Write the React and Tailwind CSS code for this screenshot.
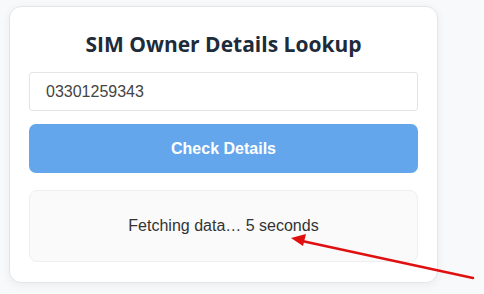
export default function App() {
  return (
    <div className="relative min-h-[294px] w-[484px] bg-[#f8f9fb] pl-[9px] pt-[6px] font-['Liberation_Sans',Arial,sans-serif]">
      <div className="w-[429px] rounded-[12px] border border-[#e3e5e8] bg-white px-[19px] pt-[23px] pb-[20px] shadow-[0_2px_10px_rgba(0,0,0,0.06)]">
        <h1 className="mb-[14px] text-center font-['Open_Sans',sans-serif] text-[21px] leading-[28px] font-bold text-[#1d2b3a]">
          SIM Owner Details Lookup
        </h1>
        <input
          readOnly
          value="03301259343"
          className="block h-[39px] w-full rounded-[3px] border border-[#e2e4e7] bg-white px-[16px] text-[16px] text-[#444] outline-none"
        />
        <button className="mt-[13px] block h-[49px] w-full rounded-[7px] bg-[#64a6ec] text-[16px] font-bold text-white">
          Check Details
        </button>
        <div className="mt-[17px] flex h-[72px] items-center justify-center rounded-[8px] border border-[#efefef] bg-[#fafafa] text-[16px] text-[#333]">
          Fetching data… 5 seconds
        </div>
      </div>
      <svg className="absolute left-0 top-0" width="484" height="294" viewBox="0 0 484 294">
        <line x1="473" y1="278" x2="302" y2="241" stroke="#e01010" strokeWidth="2.5" strokeLinecap="round" />
        <polygon points="291,238 306,234 303,246" fill="#e01010" />
      </svg>
    </div>
  );
}
